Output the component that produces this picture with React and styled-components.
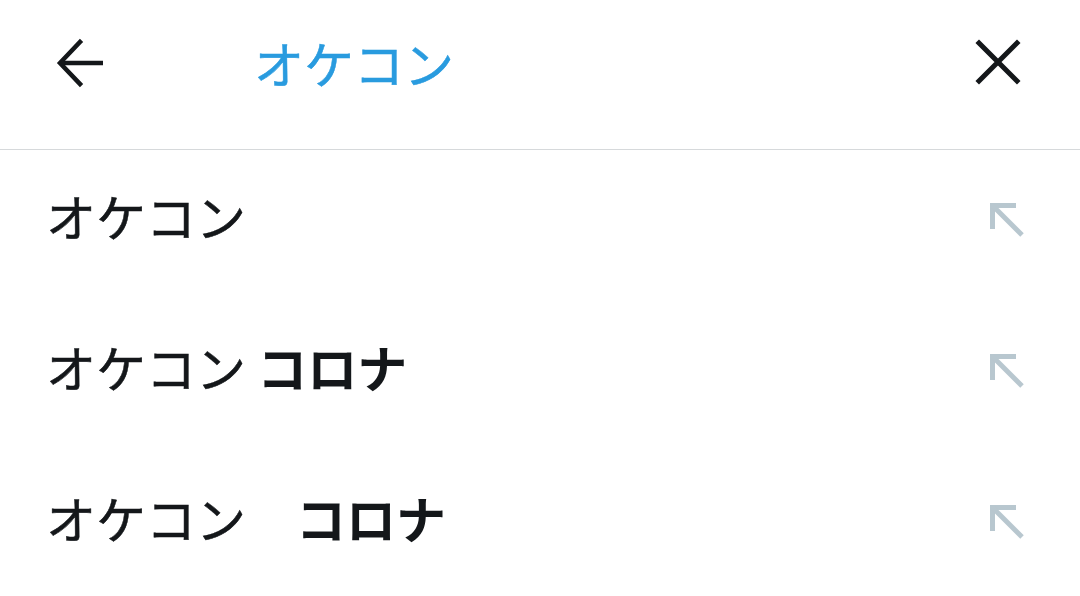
import React from "react";
import styled, { createGlobalStyle } from "styled-components";

const GlobalStyle = createGlobalStyle`
  html, body {
    margin: 0;
    padding: 0;
    background: #ffffff;
  }
  body {
    font-family: "Noto Sans CJK JP", "Noto Sans", sans-serif;
    color: #14171a;
  }
`;

const Page = styled.div`
  width: 1080px;
  height: 596px;
  overflow: hidden;
  background: #ffffff;
`;

const Header = styled.header`
  height: 150px;
  display: flex;
  align-items: center;
  padding: 0 56px 26px 54px;
  box-sizing: border-box;
  border-bottom: 1px solid #d6d9db;
`;

const IconButton = styled.button`
  width: 52px;
  height: 52px;
  padding: 0;
  border: none;
  background: none;
  display: inline-flex;
  align-items: center;
  justify-content: center;
  color: #14171a;
  cursor: pointer;
`;

const Title = styled.h1`
  margin: 0 0 0 ${(p) => p.$offset}px;
  flex: 1;
  font-size: 50px;
  line-height: 1;
  font-weight: 400;
  color: #299bdf;
  -webkit-text-stroke: 0.5px #299bdf;
  font-family: "Noto Sans CJK JP", sans-serif;
`;

const List = styled.ul`
  list-style: none;
  margin: 0;
  padding: 0;
`;

const Row = styled.li`
  height: 151px;
  display: flex;
  align-items: center;
  justify-content: space-between;
  padding: 0 56px 22px 46px;
  box-sizing: border-box;
`;

const Query = styled.span`
  font-size: 50px;
  line-height: 1;
  font-weight: 400;
  white-space: pre;
  color: #14171a;
  -webkit-text-stroke: 0.5px #14171a;
  font-family: "Noto Sans CJK JP", sans-serif;
`;

const Match = styled.b`
  font-weight: 700;
  -webkit-text-stroke: 0;
`;

const FillIn = styled.span`
  display: inline-flex;
  margin-top: 8px;
  color: #b8c7cf;
`;

const BackIcon = () => (
  <svg width="52" height="52" viewBox="0 0 52 52" fill="none">
    <path d="M26 6 L6 27 L26 48" stroke="currentColor" strokeWidth="4.5" strokeLinecap="square" />
    <path d="M7 27 H49" stroke="currentColor" strokeWidth="4.5" />
  </svg>
);

const CloseIcon = () => (
  <svg width="52" height="52" viewBox="0 0 52 52" fill="none">
    <path d="M7 7 L45 45 M45 7 L7 45" stroke="currentColor" strokeWidth="5" strokeLinecap="square" />
  </svg>
);

const ArrowUpLeft = () => (
  <svg width="36" height="36" viewBox="0 0 36 36" fill="none">
    <path d="M4.5 28 V4.5 H28" stroke="currentColor" strokeWidth="5" />
    <path d="M5 5 L34 34" stroke="currentColor" strokeWidth="5" />
  </svg>
);

const suggestions = [
  { base: "オケコン", match: "" },
  { base: "オケコン ", match: "コロナ" },
  { base: "オケコン\u3000", match: "コロナ" },
];

export default function App() {
  return (
    <Page>
      <GlobalStyle />
      <Header>
        <IconButton aria-label="戻る">
          <BackIcon />
        </IconButton>
        <Title $offset={148}>オケコン</Title>
        <IconButton aria-label="クリア">
          <CloseIcon />
        </IconButton>
      </Header>
      <List>
        {suggestions.map((s, i) => (
          <Row key={i}>
            <Query>
              {s.base}
              {s.match && <Match>{s.match}</Match>}
            </Query>
            <FillIn>
              <ArrowUpLeft />
            </FillIn>
          </Row>
        ))}
      </List>
    </Page>
  );
}
